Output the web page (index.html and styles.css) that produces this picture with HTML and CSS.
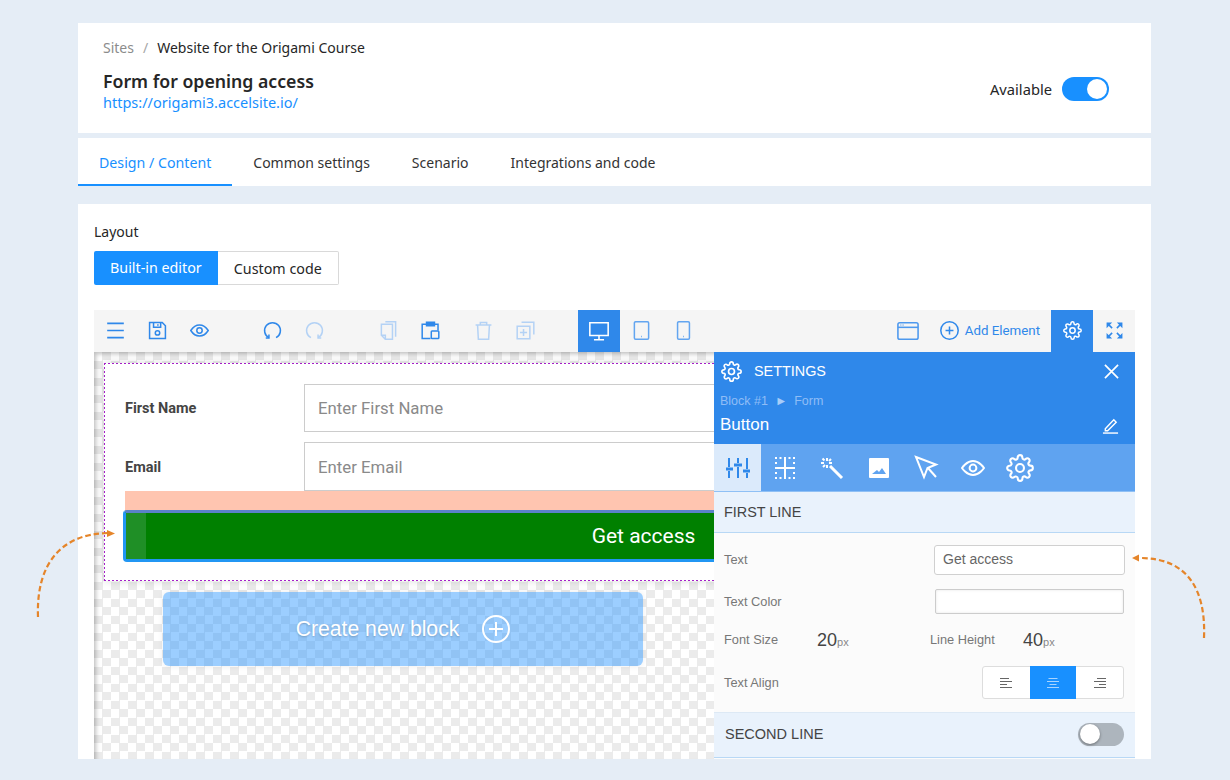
FILE: index.html
```html
<!DOCTYPE html>
<html lang="en">
<head>
<meta charset="UTF-8">
<title>Form for opening access</title>
<link rel="stylesheet" href="styles.css">
</head>
<body>

<!-- icon set -->
<svg class="defs" width="0" height="0">
  <symbol id="i-gear" viewBox="0 0 24 24"><circle cx="12" cy="12" r="3.4"/><path d="M19.4 15a1.65 1.65 0 0 0 .33 1.82l.06.06a2 2 0 0 1 0 2.83 2 2 0 0 1-2.83 0l-.06-.06a1.65 1.65 0 0 0-1.82-.33 1.65 1.65 0 0 0-1 1.51V21a2 2 0 0 1-2 2 2 2 0 0 1-2-2v-.09A1.65 1.65 0 0 0 9 19.4a1.65 1.65 0 0 0-1.82.33l-.06.06a2 2 0 0 1-2.83 0 2 2 0 0 1 0-2.83l.06-.06a1.65 1.65 0 0 0 .33-1.82 1.65 1.65 0 0 0-1.51-1H3a2 2 0 0 1-2-2 2 2 0 0 1 2-2h.09A1.65 1.65 0 0 0 4.6 9a1.65 1.65 0 0 0-.33-1.82l-.06-.06a2 2 0 0 1 0-2.83 2 2 0 0 1 2.83 0l.06.06a1.65 1.65 0 0 0 1.82.33H9a1.65 1.65 0 0 0 1-1.51V3a2 2 0 0 1 2-2 2 2 0 0 1 2 2v.09a1.65 1.65 0 0 0 1 1.51 1.65 1.65 0 0 0 1.82-.33l.06-.06a2 2 0 0 1 2.83 0 2 2 0 0 1 0 2.83l-.06.06a1.65 1.65 0 0 0-.33 1.82V9a1.65 1.65 0 0 0 1.51 1H21a2 2 0 0 1 2 2 2 2 0 0 1-2 2h-.09a1.65 1.65 0 0 0-1.51 1z"/></symbol>
  <symbol id="i-eye" viewBox="0 0 24 24"><path d="M1 12S5.500 5 12 5 23 12 23 12 18.500 19 12 19 1 12 1 12z"/><circle cx="12" cy="12" r="3.400"/></symbol>
  <symbol id="i-arc" viewBox="0 0 24 24"><path d="M7.500 21a10 10 0 1 1 9 0"/><path d="M7.500 17v4.500H3.500"/></symbol>
  <symbol id="i-copy" viewBox="0 0 24 24"><path d="M8 1h13v19"/><path d="M3 4h14v19H8l-5-5z"/><path d="M3 18h5v5"/></symbol>
</svg>

<div class="page">

  <header class="top">
    <div>
      <div class="crumbs"><span class="crumb-link">Sites</span><span class="crumb-sep">/</span>Website for the Origami Course</div>
      <h1>Form for opening access</h1>
      <a class="site-url" href="#">https://origami3.accelsite.io/</a>
    </div>
    <div class="avail">Available <span class="toggle on"></span></div>
  </header>

  <nav class="tabs">
    <a class="tab active" href="#">Design / Content</a>
    <a class="tab" href="#">Common settings</a>
    <a class="tab" href="#">Scenario</a>
    <a class="tab" href="#">Integrations and code</a>
  </nav>

  <section class="layout">
    <div class="layout-label">Layout</div>
    <div class="switch">
      <span class="switch-btn active">Built-in editor</span>
      <span class="switch-btn">Custom code</span>
    </div>

    <div class="editor">
      <div class="toolbar">
        <button class="tool"><svg class="ico" viewBox="0 0 24 24"><path d="M1.500 3h21M1.500 12h21M1.500 21h21"/></svg></button>
        <button class="tool"><svg class="ico" viewBox="0 0 24 24"><path d="M2 2h16l4 4v16H2z"/><path d="M7 2v6h9V2M12.500 4v2"/><circle cx="12" cy="15" r="2.800"/></svg></button>
        <button class="tool"><svg class="ico"><use href="#i-eye"/></svg></button>

        <button class="tool gap-u"><svg class="ico"><use href="#i-arc"/></svg></button>
        <button class="tool faded"><svg class="ico flip"><use href="#i-arc"/></svg></button>

        <button class="tool gap-l faded"><svg class="ico"><use href="#i-copy"/></svg></button>
        <button class="tool"><svg class="ico" viewBox="0 0 24 24"><path d="M12 22H1.500V4h20v8"/><path d="M7 1.500h10v4.500H7z" class="solid"/><rect x="13" y="12.500" width="9.500" height="9.500" rx="1"/></svg></button>

        <button class="tool gap-s faded"><svg class="ico" viewBox="0 0 24 24"><path d="M2 5h20M8 5V2h8v3M4.500 5l1 18h13l1-18"/></svg></button>
        <button class="tool faded"><svg class="ico" viewBox="0 0 24 24"><path d="M7 1.500h15.500V17"/><path d="M1.500 6.500h16v16h-16z"/><path d="M9.500 10v9M5 14.500h9"/></svg></button>

        <button class="tool gap-l current"><svg class="ico desk" viewBox="0 0 24 24"><path d="M2 3h20v14H2z"/><path d="M12 17v4M6.500 21.500h11"/></svg></button>
        <button class="tool mid"><svg class="ico tall" viewBox="0 0 24 24"><rect x="3" y="1" width="18" height="22" rx="1.500"/><path d="M11.500 19.500h1"/></svg></button>
        <button class="tool mid"><svg class="ico tall" viewBox="0 0 24 24"><rect x="4.500" y="1" width="15" height="22" rx="1.500"/><path d="M11.500 19.500h1"/></svg></button>

        <div class="tool-right">
          <button class="tool tool-window"><svg class="ico desk" viewBox="0 0 24 24"><rect x="1" y="3" width="22" height="18" rx="2"/><path d="M1 8h22"/><path d="M3.500 5.500h4" class="thin" stroke-dasharray="1 .6"/></svg></button>
          <div class="add-el"><svg class="ico wide" viewBox="0 0 24 24"><circle cx="12" cy="12" r="11"/><path d="M12 7v10M7 12h10"/></svg>Add Element</div>
          <button class="tool current"><svg class="ico wide"><use href="#i-gear"/></svg></button>
          <button class="tool"><svg class="ico" viewBox="0 0 24 24"><path d="M3 3l6 6M21 3l-6 6M3 21l6-6M21 21l-6-6"/><path class="fill" d="M2 2h7L2 9zM22 2h-7l7 7zM2 22h7l-7-7zM22 22h-7l7-7z"/></svg></button>
        </div>
      </div>

      <div class="canvas">
        <div class="block">
          <div class="form-row">
            <label class="form-label">First Name</label>
            <div class="form-input">Enter First Name</div>
          </div>
          <div class="form-row">
            <label class="form-label">Email</label>
            <div class="form-input">Enter Email</div>
          </div>
          <div class="padding-hl"></div>
          <div class="form-btn"><span class="btn-handle"></span><span class="btn-text">Get access</span></div>
        </div>

        <div class="create-block">Create new block
          <svg class="create-plus" viewBox="0 0 28 28"><circle cx="14" cy="14" r="13"/><path d="M14 7v14M7 14h14"/></svg>
        </div>

        <aside class="panel">
          <div class="panel-head">
            <div class="panel-title">
              <svg class="ico title-gear"><use href="#i-gear"/></svg>
              <span>SETTINGS</span>
              <svg class="panel-close" viewBox="0 0 16 16"><path d="M1 1l14 14M15 1L1 15"/></svg>
            </div>
            <div class="panel-path">Block #1 &nbsp;<span class="path-arrow">►</span>&nbsp; Form</div>
            <div class="panel-name">
              <span>Button</span>
              <svg class="panel-edit" viewBox="0 0 18 18"><path d="M3.500 12.500L12.500 3l2.500 2.500L6 14.500H3.500z"/><path d="M1 17h16"/></svg>
            </div>
          </div>

          <div class="panel-tabs">
            <div class="ptab active"><svg class="ico big" viewBox="0 0 24 24"><path d="M3 2v9M3 15v7M12 2v5M12 11v11M21 2v11M21 17v5"/><path class="heavy" d="M0 13h7M8 9h8M17 15h7"/></svg></div>
            <div class="ptab"><svg class="ico big" viewBox="0 0 24 24"><path d="M12 2v20M2 12h20"/><path d="M2 2h20M2 7h2M20 7h2M2 17h2M20 17h2M2 22h20" stroke-dasharray="2 2.500"/></svg></div>
            <div class="ptab"><svg class="ico big" viewBox="0 0 24 24"><path d="M10 10l12 12" class="heavy"/><path d="M7 2v3M7 9v3M1 7h3M9 7h3M2.500 2.500l2 2M11 3l-2 2M3 11l2-2"/></svg></div>
            <div class="ptab"><svg class="ico big" viewBox="0 0 24 24"><path class="solid-w" fill-rule="evenodd" d="M3 2h18a1 1 0 0 1 1 1v18a1 1 0 0 1-1 1H3a1 1 0 0 1-1-1V3a1 1 0 0 1 1-1zM5 18h14l-4-6-3 4-2-2z"/></svg></div>
            <div class="ptab"><svg class="ico big" viewBox="0 0 24 24"><path d="M2 1l20 7.500-8.500 3.500L10 21z"/><path d="M14 12l8 9"/></svg></div>
            <div class="ptab"><svg class="ico big"><use href="#i-eye"/></svg></div>
            <div class="ptab"><svg class="ico huge"><use href="#i-gear"/></svg></div>
          </div>

          <div class="section-head">FIRST LINE</div>
          <div class="section-body">
            <div class="prop prop-text">
              <span class="prop-label">Text</span>
              <div class="prop-input">Get access</div>
            </div>
            <div class="prop prop-color">
              <span class="prop-label">Text Color</span>
              <div class="prop-swatch"></div>
            </div>
            <div class="prop prop-sizes">
              <span class="prop-label size-label">Font Size</span>
              <span class="size-val size-first">20<small>px</small></span>
              <span class="prop-label size-label">Line Height</span>
              <span class="size-val">40<small>px</small></span>
            </div>
            <div class="prop prop-align">
              <span class="prop-label">Text Align</span>
              <div class="aligns">
                <span class="align"><svg viewBox="0 0 12 10"><path d="M0 .5h9M0 3.500h12M0 6.500h7M0 9.500h12"/></svg></span>
                <span class="align active"><svg viewBox="0 0 12 10"><path d="M1.500 .5h9M0 3.500h12M2.500 6.500h7M0 9.500h12"/></svg></span>
                <span class="align"><svg viewBox="0 0 12 10"><path d="M3 .5h9M0 3.500h12M5 6.500h7M0 9.500h12"/></svg></span>
              </div>
            </div>
          </div>
          <div class="section-head section-toggle">SECOND LINE <span class="toggle off"></span></div>
        </aside>
      </div>
    </div>
  </section>
</div>

<!-- dashed arrows over the page -->
<svg class="arrows" width="1230" height="780" viewBox="0 0 1230 780">
  <path class="dash" d="M38 617C36 565 60 534 108 533"/>
  <path class="head" d="M115 533.500l-8-3.500v7z"/>
  <path class="dash" d="M1204 638C1206 590 1188 558 1140 558"/>
  <path class="head" d="M1132 558l7-3.500v7z"/>
</svg>

</body>
</html>
```

FILE: styles.css
```css
* { box-sizing: border-box; }
html, body { height: 100%; }
body {
  margin: 0;
  background: #e5edf6;
  font-family: "Noto Sans", Arial, sans-serif;
  color: #262626;
  overflow: hidden;
  position: relative;
}
button { font: inherit; border: none; background: none; padding: 0; }
.defs { position: absolute; }
.page { width: 1073px; margin: 23px 0 0 78px; }

/* top header */
.top {
  height: 110px;
  background: white;
  padding: 15px 42px 0 25px;
  display: flex;
  justify-content: space-between;
}
.crumbs { font-size: 14px; line-height: 20px; }
.crumb-link { color: #8c8c8c; }
.crumb-sep { color: #a6a6a6; margin: 0 9px; }
h1 { font-size: 17.700px; font-weight: 600; line-height: 24px; margin: 11px 0 0; }
.site-url { display: block; font-size: 14.500px; line-height: 18px; color: #1890ff; text-decoration: none; }
.avail { display: flex; align-items: center; gap: 10px; height: 24px; margin-top: 39px; font-size: 14.700px; }

.toggle { display: inline-block; position: relative; border-radius: 12px; width: 47px; height: 24px; }
.toggle::after { content: ""; position: absolute; top: 2px; width: 20px; height: 20px; border-radius: 50%; background: white; }
.toggle.on { background: #1890ff; }
.toggle.on::after { right: 2px; }
.toggle.off { background: #adb5bd; width: 46px; height: 23px; margin-top: 1px; }
.toggle.off::after { left: 2px; top: 1px; box-shadow: 0 1px 3px rgba(0,0,0,.4); }

/* tabs */
.tabs { display: flex; height: 48px; margin-top: 5px; background: white; }
.tab {
  padding: 0 21px;
  line-height: 50px;
  font-size: 14px;
  color: #333;
  text-decoration: none;
  border-bottom: 2px solid transparent;
}
.tab.active { font-size: 14.200px; color: #1890ff; border-bottom-color: #1890ff; }

/* layout card */
.layout { height: 555px; margin-top: 18px; padding: 18px 16px 0; background: white; overflow: hidden; }
.layout-label { font-size: 14px; line-height: 20px; }
.switch { display: flex; margin-top: 9px; height: 34px; }
.switch-btn { padding: 0 16px; line-height: 34px; font-size: 14.300px; border: 1px solid #d9d9d9; border-left: none; border-radius: 0 2px 2px 0; }
.switch-btn.active { background: #1890ff; color: white; border: none; border-radius: 2px 0 0 2px; }

/* editor */
.editor { margin-top: 25px; font-family: Roboto, sans-serif; }
.toolbar { display: flex; height: 42px; background: #f5f5f5; color: #2f88ea; }
.tool { width: 42px; height: 42px; padding-bottom: 1px; display: flex; align-items: center; justify-content: center; color: #2f88ea; }
.tool.faded { color: #b4d2f5; }
.tool.mid { color: #63a5f0; }
.tool.current { background: #2f88ea; color: white; }
.gap-u { margin-left: 31px; }
.gap-l { margin-left: 32px; }
.gap-s { margin-left: 11px; }
.tool-right { margin-left: auto; display: flex; }
.add-el { display: flex; align-items: center; gap: 6px; padding-bottom: 1px; font-size: 13.300px; margin: 0 11px; }
.tool-window { color: #4e99ee; }

.ico { width: 19px; height: 19px; fill: none; stroke: currentColor; stroke-width: 1.900; overflow: visible; }
.ico.wide { width: 19px; height: 19px; }
.ico.desk { width: 22px; height: 22px; stroke-width: 1.700; }
.ico.tall { width: 19px; height: 19px; stroke-width: 1.900; }
.ico.flip { transform: scaleX(-1); }
.ico.title-gear { width: 21px; height: 21px; }
.ico.big { width: 24px; height: 24px; stroke-width: 2; }
.ico.huge { width: 28px; height: 28px; stroke-width: 1.800; }
.ico .thin { stroke-width: 1; }
.ico .solid { fill: currentColor; }
.ico .fill { fill: currentColor; stroke: none; }
.ico .heavy { stroke-width: 3; }
.ico .solid-w { fill: currentColor; stroke: none; }

/* canvas with the transparent checker */
.canvas {
  position: relative;
  height: 407px;
  overflow: hidden;
  padding: 11px 0 0 10px;
  background: conic-gradient(#ebebeb 25%, #fff 0 50%, #ebebeb 0 75%, #fff 0) 0 0 / 17px 17px;
  box-shadow: inset 3px 3px 4px -1px rgba(0,0,0,.25);
}
.block {
  width: 1040px;
  height: 218px;
  padding: 21px 0 0 21px;
  background:
    linear-gradient(90deg, #a51ec8 50%, transparent 0) 0 0 / 4px 1px repeat-x,
    linear-gradient(90deg, #a51ec8 50%, transparent 0) 0 100% / 4px 1px repeat-x,
    linear-gradient(#a51ec8 50%, transparent 0) 0 0 / 1px 4px repeat-y,
    white;
  box-shadow: 0 0 8px rgba(0,0,0,.15);
}
.form-row { display: flex; align-items: center; height: 48px; margin-bottom: 10px; }
.form-row + .form-row { margin-bottom: 0; height: 49px; }
.form-row + .form-row .form-label { padding-top: 1px; }
.form-label { width: 179px; font-size: 14.500px; font-weight: 700; color: #444; }
.form-input { flex: 1; height: 100%; border: 1px solid #ccc; padding-left: 13px; font-size: 16.800px; line-height: 47px; color: #8a8a8a; }
.form-row + .form-row .form-input { line-height: 48px; }
.padding-hl { height: 20px; background: #ffc5b0; }
.form-btn {
  display: flex;
  height: 52px;
  margin: -1px 0 0 -2px;
  border: 3px solid #2196f3;
  border-top-color: #5a82c8;
  border-radius: 4px;
  background: green;
  color: white;
  font-size: 21px;
  line-height: 46px;
}
.btn-handle { width: 20px; background: #1f8f26; }
.btn-text { flex: 1; text-align: center; }
.create-block {
  display: flex;
  align-items: center;
  justify-content: center;
  gap: 23px;
  width: 480px;
  height: 74px;
  margin: 11px 0 0 59px;
  border-radius: 6px;
  background: rgba(30,144,255,.44);
  color: white;
  font-family: "Liberation Sans", Arial, sans-serif;
  font-size: 21.200px;
  text-shadow: 0 1px 2px rgba(0,0,0,.2);
  box-shadow: 0 0 6px rgba(0,0,0,.08);
}
.create-plus { width: 28px; height: 28px; fill: none; stroke: white; stroke-width: 2; }

/* settings panel */
.panel {
  position: absolute;
  top: 0;
  right: 0;
  width: 421px;
  height: 100%;
  background: #fbfbfb;
  font-family: "Liberation Sans", Arial, sans-serif;
}
.panel-head { height: 92px; background: #2f88ea; color: white; padding: 8px 16px 0 6px; }
.panel-title { display: flex; align-items: center; gap: 12px; height: 22px; padding-left: 1px; font-size: 14.400px; }
.panel-close { width: 15px; height: 15px; margin-left: auto; fill: none; stroke: white; stroke-width: 1.800; }
.panel-path { margin-top: 12px; font-size: 12.500px; line-height: 15px; color: #8fbdf6; }
.path-arrow { color: #a8cdf8; }
.panel-name { display: flex; justify-content: space-between; align-items: center; margin-top: 5px; font-size: 17px; line-height: 22px; }
.panel-edit { width: 17px; height: 17px; fill: none; stroke: white; stroke-width: 1.500; }
.panel-tabs { display: flex; height: 48px; background: #5fa3f0; color: white; border-bottom: 1px solid #8fc0f5; }
.ptab { width: 47px; display: flex; align-items: center; justify-content: center; }
.ptab.active { background: #dbeafb; color: #2f88ea; }

.section-head { height: 41px; padding-left: 10px; font-size: 14.400px; line-height: 40px; color: #444; background: #e9f2fc; border-bottom: 1px solid #b8d8f5; }
.section-body { height: 179px; padding: 12px 10px 0; }
.prop { display: flex; align-items: center; justify-content: space-between; }
.prop-label { font-size: 12.800px; line-height: 14px; color: #777; }
.prop-text { height: 30px; }
.prop-input { width: 191px; height: 30px; border: 1px solid #d0d0d0; border-radius: 3px; padding-left: 8px; background: white; font-size: 14px; line-height: 27px; color: #666; }
.prop-color { height: 25px; margin-top: 14px; }
.prop-swatch { width: 189px; height: 25px; margin-right: 1px; border: 1px solid #ccc; border-radius: 2px; background: white; box-shadow: inset 0 0 3px rgba(0,0,0,.1); }
.prop-sizes { height: 26px; margin-top: 13px; justify-content: flex-start; }
.size-label { width: 93px; }
.size-val { font-size: 18px; color: #444; }
.size-val small { font-size: 11px; color: #888; }
.size-first { width: 113px; }
.prop-align { height: 33px; margin-top: 13px; }
.aligns { display: flex; width: 142px; margin-right: 1px; border: 1px solid #ddd; border-radius: 3px; background: white; }
.align { flex: 1; height: 31px; display: flex; align-items: center; justify-content: center; }
.align svg { width: 12px; height: 10px; fill: none; stroke: #666; stroke-width: 1.200; }
.align.active { height: 33px; margin: -1px 0; background: #1890ff; }
.align.active svg { stroke: #a8d4ff; }
.section-toggle {
  height: 46px;
  line-height: normal;
  display: flex;
  align-items: center;
  justify-content: space-between;
  padding: 0 11px 2px;
  border-top: 1px solid #dde9f5;
  font-size: 14.500px;
}

/* orange arrows */
.arrows { position: absolute; top: 0; left: 0; pointer-events: none; }
.arrows .dash { fill: none; stroke: #e5852a; stroke-width: 2.200; stroke-dasharray: 5.500 3; }
.arrows .head { fill: #e5852a; }
```
